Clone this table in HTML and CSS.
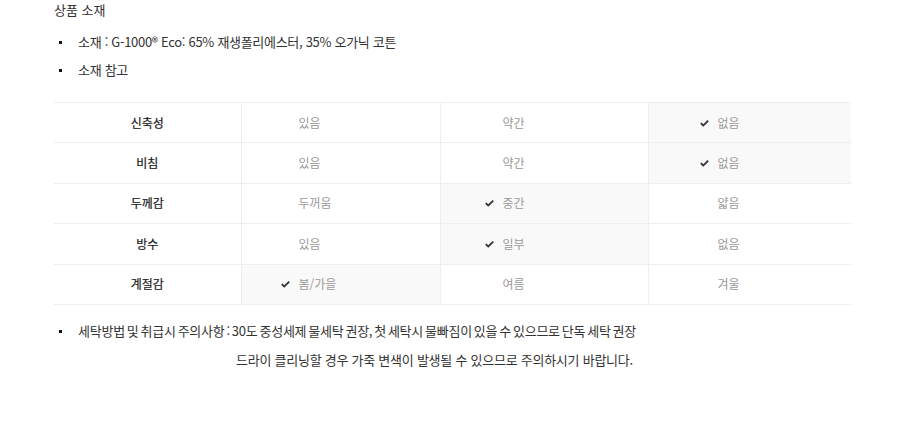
FILE: index.html
```html
<!DOCTYPE html>
<html lang="ko">
<head>
<meta charset="utf-8">
<link rel="stylesheet" href="styles.css">
</head>
<body>
<div class="wrap">
  <h3 class="title">상품 소재</h3>
  <ul class="list">
    <li>소재 : G-1000® Eco: 65% 재생폴리에스터, 35% 오가닉 코튼</li>
    <li>소재 참고</li>
  </ul>
  <table class="spec">
    <colgroup>
      <col class="c1"><col class="c2"><col class="c3"><col class="c4">
    </colgroup>
    <tr>
      <th>신축성</th>
      <td>있음</td>
      <td>약간</td>
      <td class="on"><svg class="chk" viewBox="0 0 10 8"><path d="M0 4.3 L1.5 2.8 L3.6 4.8 L8.5 0 L10 1.5 L3.6 7.8 Z"/></svg>없음</td>
    </tr>
    <tr>
      <th>비침</th>
      <td>있음</td>
      <td>약간</td>
      <td class="on"><svg class="chk" viewBox="0 0 10 8"><path d="M0 4.3 L1.5 2.8 L3.6 4.8 L8.5 0 L10 1.5 L3.6 7.8 Z"/></svg>없음</td>
    </tr>
    <tr>
      <th>두께감</th>
      <td>두꺼움</td>
      <td class="on"><svg class="chk" viewBox="0 0 10 8"><path d="M0 4.3 L1.5 2.8 L3.6 4.8 L8.5 0 L10 1.5 L3.6 7.8 Z"/></svg>중간</td>
      <td>얇음</td>
    </tr>
    <tr>
      <th>방수</th>
      <td>있음</td>
      <td class="on"><svg class="chk" viewBox="0 0 10 8"><path d="M0 4.3 L1.5 2.8 L3.6 4.8 L8.5 0 L10 1.5 L3.6 7.8 Z"/></svg>일부</td>
      <td>없음</td>
    </tr>
    <tr>
      <th>계절감</th>
      <td class="on"><svg class="chk" viewBox="0 0 10 8"><path d="M0 4.3 L1.5 2.8 L3.6 4.8 L8.5 0 L10 1.5 L3.6 7.8 Z"/></svg>봄/가을</td>
      <td>여름</td>
      <td>겨울</td>
    </tr>
  </table>
  <ul class="list care">
    <li>세탁방법 및 취급시 주의사항 : 30도 중성세제 물세탁 권장, 첫 세탁시 물빠짐이 있을 수 있으므로 단독 세탁 권장</li>
  </ul>
  <p class="care-note">드라이 클리닝할 경우 가죽 변색이 발생될 수 있으므로 주의하시기 바랍니다.</p>
</div>
</body>
</html>
```

FILE: styles.css
```css
html, body {
  margin: 0;
  padding: 0;
  background: #fff;
}
body {
  font-family: "Noto Sans CJK KR", "Noto Sans", sans-serif;
  color: #333;
}
.wrap {
  width: 797px;
  padding: 0 0 0 54px;
}
.title {
  margin: 0;
  padding-top: 1px;
  font-size: 13px;
  font-weight: 400;
  line-height: 18px;
  color: #333;
}
.list {
  list-style: none;
  margin: 14px 0 0;
  padding: 0;
}
.list li {
  position: relative;
  padding-left: 24px;
  font-size: 13px;
  line-height: 18px;
  margin-bottom: 10px;
  letter-spacing: -0.3px;
  color: #333;
}
.list li::before {
  content: "";
  position: absolute;
  left: 5px;
  top: 8px;
  width: 3px;
  height: 3px;
  background: #111;
}
.spec {
  width: 797px;
  border-collapse: collapse;
  margin-top: 23px;
  table-layout: fixed;
  font-size: 12px;
}
.c1 { width: 187px; }
.c2 { width: 199px; }
.c3 { width: 208px; }
.c4 { width: 203px; }
.spec tr {
  height: 40.4px;
}
.spec th, .spec td {
  border-top: 1px solid #eee;
  border-bottom: 1px solid #eee;
  padding: 0;
  line-height: 18px;
}
.spec th {
  text-align: center;
  font-weight: 400;
  color: #1a1a1a;
  font-size: 12px;
  -webkit-text-stroke: 0.2px #1a1a1a;
}
.spec td {
  border-left: 1px solid #eee;
  color: #999;
  text-align: left;
}
.spec td:nth-child(2) { padding-left: 57px; }
.spec td:nth-child(3) { padding-left: 62px; }
.spec td:nth-child(4) { padding-left: 69px; }
.spec td.on {
  background: #f9f9f9;
}
.chk {
  width: 9px;
  height: 7px;
  fill: #333;
  margin-left: -18px;
  margin-right: 9px;
  vertical-align: 1px;
}
.care {
  margin-top: 17px;
}
.care li {
  margin-bottom: 0;
  font-size: 13px;
  letter-spacing: -0.25px;
  word-spacing: -1.4px;
}
.care-note {
  margin: 11px 0 0;
  padding-left: 182px;
  font-size: 13px;
  line-height: 18px;
  letter-spacing: -0.25px;
  color: #333;
}
```
